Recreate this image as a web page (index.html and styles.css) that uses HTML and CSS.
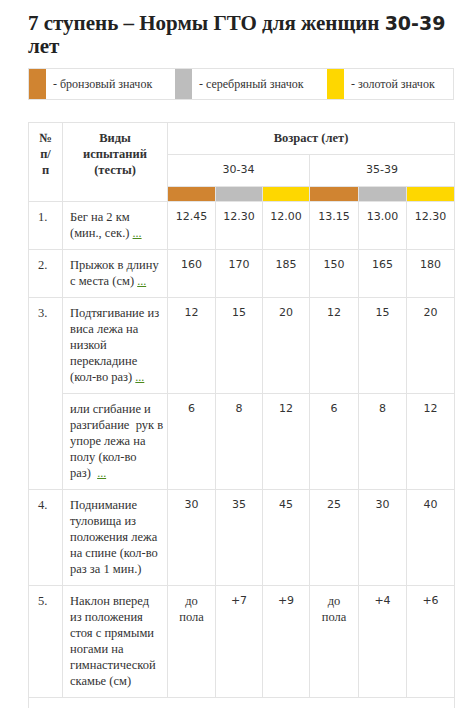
FILE: index.html
```html
<!DOCTYPE html>
<html lang="ru">
<head>
<meta charset="utf-8">
<title>Нормы ГТО</title>
<link rel="stylesheet" href="styles.css">
</head>
<body>
<div class="page">
  <h1 class="title">7 ступень – Нормы ГТО для женщин <span class="num">30-39</span> лет</h1>

  <div class="legend">
    <div class="legend-item li-1"><span class="sw bronze"></span><span class="legend-text">- бронзовый значок</span></div>
    <div class="legend-item li-2"><span class="sw silver"></span><span class="legend-text">- серебряный значок</span></div>
    <div class="legend-item li-3"><span class="sw gold"></span><span class="legend-text">- золотой значок</span></div>
  </div>

  <table class="norms">
    <colgroup>
      <col class="c-no"><col class="c-name">
      <col class="c-v1"><col class="c-v2"><col class="c-v3"><col class="c-v4"><col class="c-v5"><col class="c-v6">
    </colgroup>
    <thead>
      <tr>
        <th rowspan="3" class="h-no">№<br>п/<br>п</th>
        <th rowspan="3" class="h-name">Виды<br>испытаний<br>(тесты)</th>
        <th colspan="6" class="h-age">Возраст (лет)</th>
      </tr>
      <tr>
        <td colspan="3" class="val">30-34</td>
        <td colspan="3" class="val">35-39</td>
      </tr>
      <tr class="colors">
        <td class="bronze"></td><td class="silver"></td><td class="gold"></td>
        <td class="bronze"></td><td class="silver"></td><td class="gold"></td>
      </tr>
    </thead>
    <tbody>
      <tr>
        <td class="no">1.</td>
        <td class="name">Бег на 2 км<br>(мин., сек.) <a class="more" href="#">...</a></td>
        <td class="val">12.45</td><td class="val">12.30</td><td class="val">12.00</td>
        <td class="val">13.15</td><td class="val">13.00</td><td class="val">12.30</td>
      </tr>
      <tr>
        <td class="no">2.</td>
        <td class="name">Прыжок в длину<br>с места (см) <a class="more" href="#">...</a></td>
        <td class="val">160</td><td class="val">170</td><td class="val">185</td>
        <td class="val">150</td><td class="val">165</td><td class="val">180</td>
      </tr>
      <tr>
        <td class="no" rowspan="2">3.</td>
        <td class="name">Подтягивание из<br>виса лежа на<br>низкой<br>перекладине<br>(кол-во раз) <a class="more" href="#">...</a></td>
        <td class="val">12</td><td class="val">15</td><td class="val">20</td>
        <td class="val">12</td><td class="val">15</td><td class="val">20</td>
      </tr>
      <tr>
        <td class="name">или сгибание и<br>разгибание &nbsp;рук в<br>упоре лежа на<br>полу (кол-во<br>раз) &nbsp;<a class="more" href="#">...</a></td>
        <td class="val">6</td><td class="val">8</td><td class="val">12</td>
        <td class="val">6</td><td class="val">8</td><td class="val">12</td>
      </tr>
      <tr>
        <td class="no">4.</td>
        <td class="name">Поднимание<br>туловища из<br>положения лежа<br>на спине (кол-во<br>раз за 1 мин.)</td>
        <td class="val">30</td><td class="val">35</td><td class="val">45</td>
        <td class="val">25</td><td class="val">30</td><td class="val">40</td>
      </tr>
      <tr>
        <td class="no">5.</td>
        <td class="name">Наклон вперед<br>из положения<br>стоя с прямыми<br>ногами на<br>гимнастической<br>скамье (см)</td>
        <td class="txt">до<br>пола</td><td class="val">+7</td><td class="val">+9</td>
        <td class="txt">до<br>пола</td><td class="val">+4</td><td class="val">+6</td>
      </tr>
      <tr>
        <td colspan="8" class="last">&nbsp;</td>
      </tr>
    </tbody>
  </table>
</div>
</body>
</html>
```

FILE: styles.css
```css
html, body {
  margin: 0;
  padding: 0;
  background: #ffffff;
}

.page {
  padding: 12px 20px 0 28px;
  font-family: "Liberation Serif", "Times New Roman", serif;
  color: #333333;
}

.title {
  margin: 0 0 10px 0;
  font-family: "Liberation Serif", "Times New Roman", serif;
  font-size: 21px;
  line-height: 23px;
  font-weight: bold;
  color: #222222;
}

.num {
  font-family: "DejaVu Sans", Verdana, sans-serif;
  font-size: 19px;
  font-weight: bold;
}

.legend {
  display: flex;
  width: 424px;
  height: 30px;
  border: 1px solid #e3e3e3;
  margin-bottom: 22px;
}

.legend-item {
  display: flex;
  align-items: stretch;
  flex: none;
}

.li-1 { width: 146px; }
.li-2 { width: 152px; }
.li-3 { width: 126px; }

.sw {
  width: 17px;
  flex: none;
}

.legend-text {
  padding-left: 7px;
  font-family: "Liberation Serif", "Times New Roman", serif;
  font-size: 12px;
  line-height: 30px;
  color: #333333;
  white-space: nowrap;
}

.bronze { background: #d08431; }
.silver { background: #bdbdbd; }
.gold { background: #fed700; }

.norms {
  border-collapse: collapse;
  table-layout: fixed;
  width: 426px;
  font-family: "Liberation Serif", "Times New Roman", serif;
  font-size: 12.5px;
  line-height: 16px;
}

.c-no { width: 34px; }
.c-name { width: 105px; }
.c-v1 { width: 48px; }
.c-v2 { width: 47px; }
.c-v3 { width: 47px; }
.c-v4 { width: 49px; }
.c-v5 { width: 48px; }
.c-v6 { width: 48px; }

.norms th,
.norms td {
  border: 1px solid #e3e3e3;
  padding: 7px 7px 8px 7px;
  vertical-align: top;
  font-family: "Liberation Serif", "Times New Roman", serif;
  font-size: 12.5px;
  line-height: 16px;
}

.norms th {
  font-weight: bold;
  text-align: center;
  color: #333333;
}

.colors td {
  height: 14px;
  padding: 0;
  line-height: 0;
}

.norms .no {
  padding-left: 9px;
}

.norms .name {
  padding-right: 3px;
  white-space: nowrap;
}

.norms .val {
  text-align: center;
  font-family: "DejaVu Sans", Verdana, sans-serif;
  font-size: 11px;
  padding-left: 2px;
  padding-right: 2px;
}

.norms .txt {
  text-align: center;
}

.more {
  color: #4c8a1d;
  text-decoration: underline;
  font-family: "Liberation Serif", serif;
  font-size: 12px;
}

.norms .last {
  height: 16px;
}
```
